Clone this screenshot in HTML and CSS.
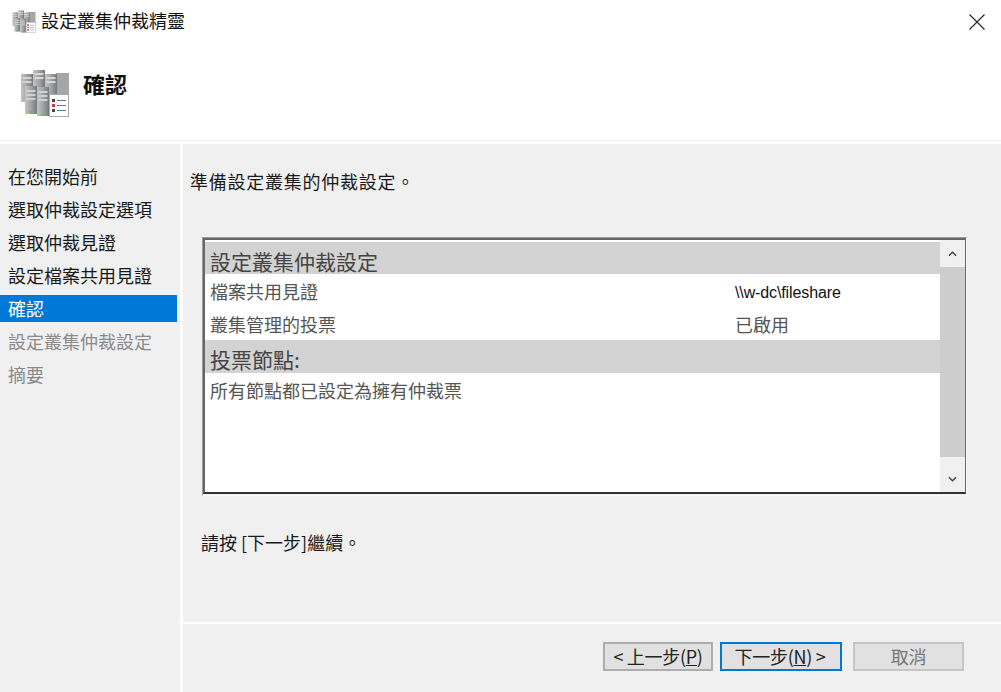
FILE: index.html
```html
<!DOCTYPE html>
<html lang="zh-Hant">
<head>
<title>設定叢集仲裁精靈</title>
<meta charset="utf-8" />
<link rel="stylesheet" href="styles.css">
</head>
<body>

<svg class="defs" width="0" height="0">
<defs>
<linearGradient id="metal" x1="0" x2="1" y1="0" y2="0">
<stop offset="0" stop-color="#c4c4c4"/>
<stop offset="0.6" stop-color="#9a9c9e"/>
<stop offset="1" stop-color="#75787b"/>
</linearGradient>
<symbol id="wizard" viewBox="0 0 50 50">
<rect x="36" y="4" width="13" height="26" fill="#a4a6a8"/>
<rect x="1" y="5" width="12" height="28" fill="url(#metal)"/>
<rect x="2.5" y="8" width="9" height="2" fill="#d4d4d4"/>
<rect x="2.5" y="12" width="9" height="2" fill="#d4d4d4"/>
<rect x="13" y="1" width="12" height="28" fill="url(#metal)"/>
<rect x="14.5" y="4" width="9" height="2" fill="#d8d8d8"/>
<rect x="14.5" y="8" width="9" height="2" fill="#d8d8d8"/>
<rect x="25" y="5" width="12" height="26" fill="url(#metal)"/>
<rect x="26.5" y="8" width="9" height="2" fill="#d8d8d8"/>
<rect x="26.5" y="12" width="9" height="2" fill="#d8d8d8"/>
<rect x="5" y="17" width="12" height="28" fill="url(#metal)"/>
<rect x="6.5" y="21" width="9" height="2" fill="#d0d0d0"/>
<rect x="6.5" y="25" width="9" height="2" fill="#d0d0d0"/>
<rect x="6.5" y="29" width="9" height="2" fill="#d0d0d0"/>
<rect x="17" y="18" width="12" height="29" fill="url(#metal)"/>
<rect x="18.5" y="22" width="9" height="2" fill="#d0d0d0"/>
<rect x="18.5" y="26" width="9" height="2" fill="#d0d0d0"/>
<rect x="18.5" y="30" width="9" height="2" fill="#d0d0d0"/>
<rect x="9.5" y="42" width="3" height="3" fill="#6cc24a"/>
<rect x="21.5" y="44" width="3" height="3" fill="#6cc24a"/>
<rect x="29.5" y="25.5" width="19" height="22" fill="#fdfdfd" stroke="#a8a8a8"/>
<rect x="32" y="30" width="3" height="3" fill="#444"/>
<rect x="32" y="35" width="3" height="3" fill="#d8363c"/>
<rect x="32" y="40" width="3" height="3" fill="#444"/>
<rect x="37" y="31" width="9" height="1" fill="#66788c"/>
<rect x="37" y="36" width="9" height="1" fill="#66788c"/>
<rect x="37" y="41" width="9" height="1" fill="#66788c"/>
</symbol>
</defs>
</svg>

<header class="top">
<div class="titlebar">
<svg class="title-icon"><use href="#wizard"/></svg>
<span class="title-text">設定叢集仲裁精靈</span>
<svg class="close" viewBox="0 0 16 16"><path d="M0.5 0.5 L15.5 15.5 M15.5 0.5 L0.5 15.5" stroke="#222" stroke-width="1.1" fill="none"/></svg>
</div>
<div class="banner">
<svg class="banner-icon"><use href="#wizard"/></svg>
<h1>確認</h1>
</div>
</header>

<div class="body">
<nav class="steps">
<div class="step">在您開始前</div>
<div class="step">選取仲裁設定選項</div>
<div class="step">選取仲裁見證</div>
<div class="step">設定檔案共用見證</div>
<div class="step current">確認</div>
<div class="step off">設定叢集仲裁設定</div>
<div class="step off">摘要</div>
</nav>

<main class="content">
<div class="pane">
<p class="lead">準備設定叢集的仲裁設定。</p>

<div class="report-wrap">
<div class="report">
<div class="report-rows">
<div class="group">設定叢集仲裁設定</div>
<div class="row"><span class="key">檔案共用見證</span><span class="val latin">\\w-dc\fileshare</span></div>
<div class="row"><span class="key">叢集管理的投票</span><span class="val">已啟用</span></div>
<div class="group second">投票節點:</div>
<div class="row"><span class="key">所有節點都已設定為擁有仲裁票</span></div>
</div>
<div class="scrollbar">
<div class="arrow up"><svg viewBox="0 0 10 6"><path d="M1 5 L5 1 L9 5" fill="none" stroke="#444" stroke-width="1.6"/></svg></div>
<div class="thumb"></div>
<div class="arrow down"><svg viewBox="0 0 10 6"><path d="M1 1 L5 5 L9 1" fill="none" stroke="#444" stroke-width="1.6"/></svg></div>
</div>
</div>
</div>

<p class="hint">請按 [下一步] <span class="hint-end">繼續。</span></p>
</div>

<footer class="buttons">
<button class="btn back">&lt; 上一步(<u>P</u>)</button>
<button class="btn next">下一步(<u>N</u>) &gt;</button>
<button class="btn cancel">取消</button>
</footer>
</main>
</div>

</body>
</html>
```

FILE: styles.css
```css
* {
    box-sizing: border-box;
}

html, body {
    height: 100%;
}

body {
    margin: 0;
    background-color: #fff;
    color: #222;
    font-family: "Noto Sans CJK TC", "Liberation Sans", sans-serif;
    font-size: 18px;
    overflow: hidden;
}

.defs {
    display: block;
    height: 0;
}

.top {
    height: 141px;
    border-bottom: 1px solid #f0f0f0;
}

.titlebar {
    display: flex;
    align-items: center;
    height: 44px;
    padding-left: 12px;
    padding-right: 16px;
}

.title-icon {
    width: 24px;
    height: 24px;
    margin-right: 5px;
}

.title-text {
    flex: 1;
    align-self: flex-start;
    line-height: 40px;
    color: #111;
}

.close {
    width: 16px;
    height: 16px;
}

.banner {
    display: flex;
    align-items: flex-start;
    padding: 25px 0 0 20px;
}

.banner-icon {
    width: 50px;
    height: 50px;
    margin-right: 13px;
}

.banner h1 {
    margin: 0;
    font-size: 22px;
    line-height: 28px;
    font-weight: bold;
    color: #111;
}

.body {
    display: flex;
    height: 551px;
    padding-top: 3px;
}

.steps {
    width: 180px;
    background-color: #f0f0f0;
    padding: 16px 3px 0 0;
}

.step {
    height: 33px;
    line-height: 32px;
    padding-left: 8px;
    color: #1a1a1a;
}

.step.current {
    height: 27px;
    margin: 3px 0;
    line-height: 27px;
    background-color: #0078d7;
    color: #fff;
}

.step.off {
    color: #8a8a8a;
}

.content {
    flex: 1;
    display: flex;
    flex-direction: column;
    margin-left: 3px;
    background-color: #f0f0f0;
}

.pane {
    height: 480px;
    border-bottom: 2px solid #fff;
    padding: 21px 34px 0 7px;
}

.lead {
    margin: 0 0 40px;
    font-size: 18px;
    line-height: 32px;
    letter-spacing: 0.75px;
    color: #1a1a1a;
}

.report-wrap {
    margin-left: 12px;
    height: 259px;
    border: 1px solid #9a9a9a;
    border-right-color: #fafafa;
    border-bottom-color: #fafafa;
}

.report {
    display: flex;
    height: 256px;
    border: 2px solid #666;
    border-right-width: 1px;
    border-bottom-color: #333;
    background-color: #fff;
}

.report-rows {
    flex: 1;
    padding-top: 2px;
}

.group {
    height: 32px;
    padding: 6px 0 0 5px;
    line-height: 26px;
    font-size: 21px;
    background-color: #d3d3d3;
    color: #444;
}

.group.second {
    height: 33px;
}

.row {
    display: flex;
    height: 33px;
    line-height: 34px;
    padding-left: 5px;
    color: #555;
    overflow: hidden;
}

.key {
    width: 525px;
}

.val.latin {
    font-family: "Liberation Sans", sans-serif;
    font-size: 16px;
    line-height: 37px;
    letter-spacing: -0.12px;
    color: #111;
}

.scrollbar {
    width: 25px;
    display: flex;
    flex-direction: column;
    background-color: #f0f0f0;
}

.arrow {
    display: flex;
    justify-content: center;
}

.arrow svg {
    width: 9px;
    height: 6px;
}

.arrow.up {
    height: 27px;
    padding-top: 11px;
}

.arrow.down {
    height: 35px;
    padding-top: 19px;
}

.thumb {
    flex: 1;
    background-color: #cdcdcd;
}

.hint {
    margin: 30px 0 0 11px;
    font-size: 18px;
    line-height: 32px;
    color: #1a1a1a;
}

.hint-end {
    margin-left: -4px;
}

.buttons {
    display: flex;
    align-items: flex-start;
    padding: 18px 0 0 420px;
}

.btn {
    height: 29px;
    padding: 0 0 2px;
    font-family: inherit;
    font-size: 18px;
    line-height: 24px;
    letter-spacing: -0.3px;
    background-color: #e1e1e1;
    border: 2px solid #adadad;
    color: #222;
}

.back {
    width: 110px;
}

.next {
    width: 122px;
    margin-left: 7px;
    padding-right: 2px;
    border-color: #0078d7;
}

.cancel {
    width: 111px;
    margin-left: 11px;
    border-color: #c6c6c6;
    color: #777;
}
```
